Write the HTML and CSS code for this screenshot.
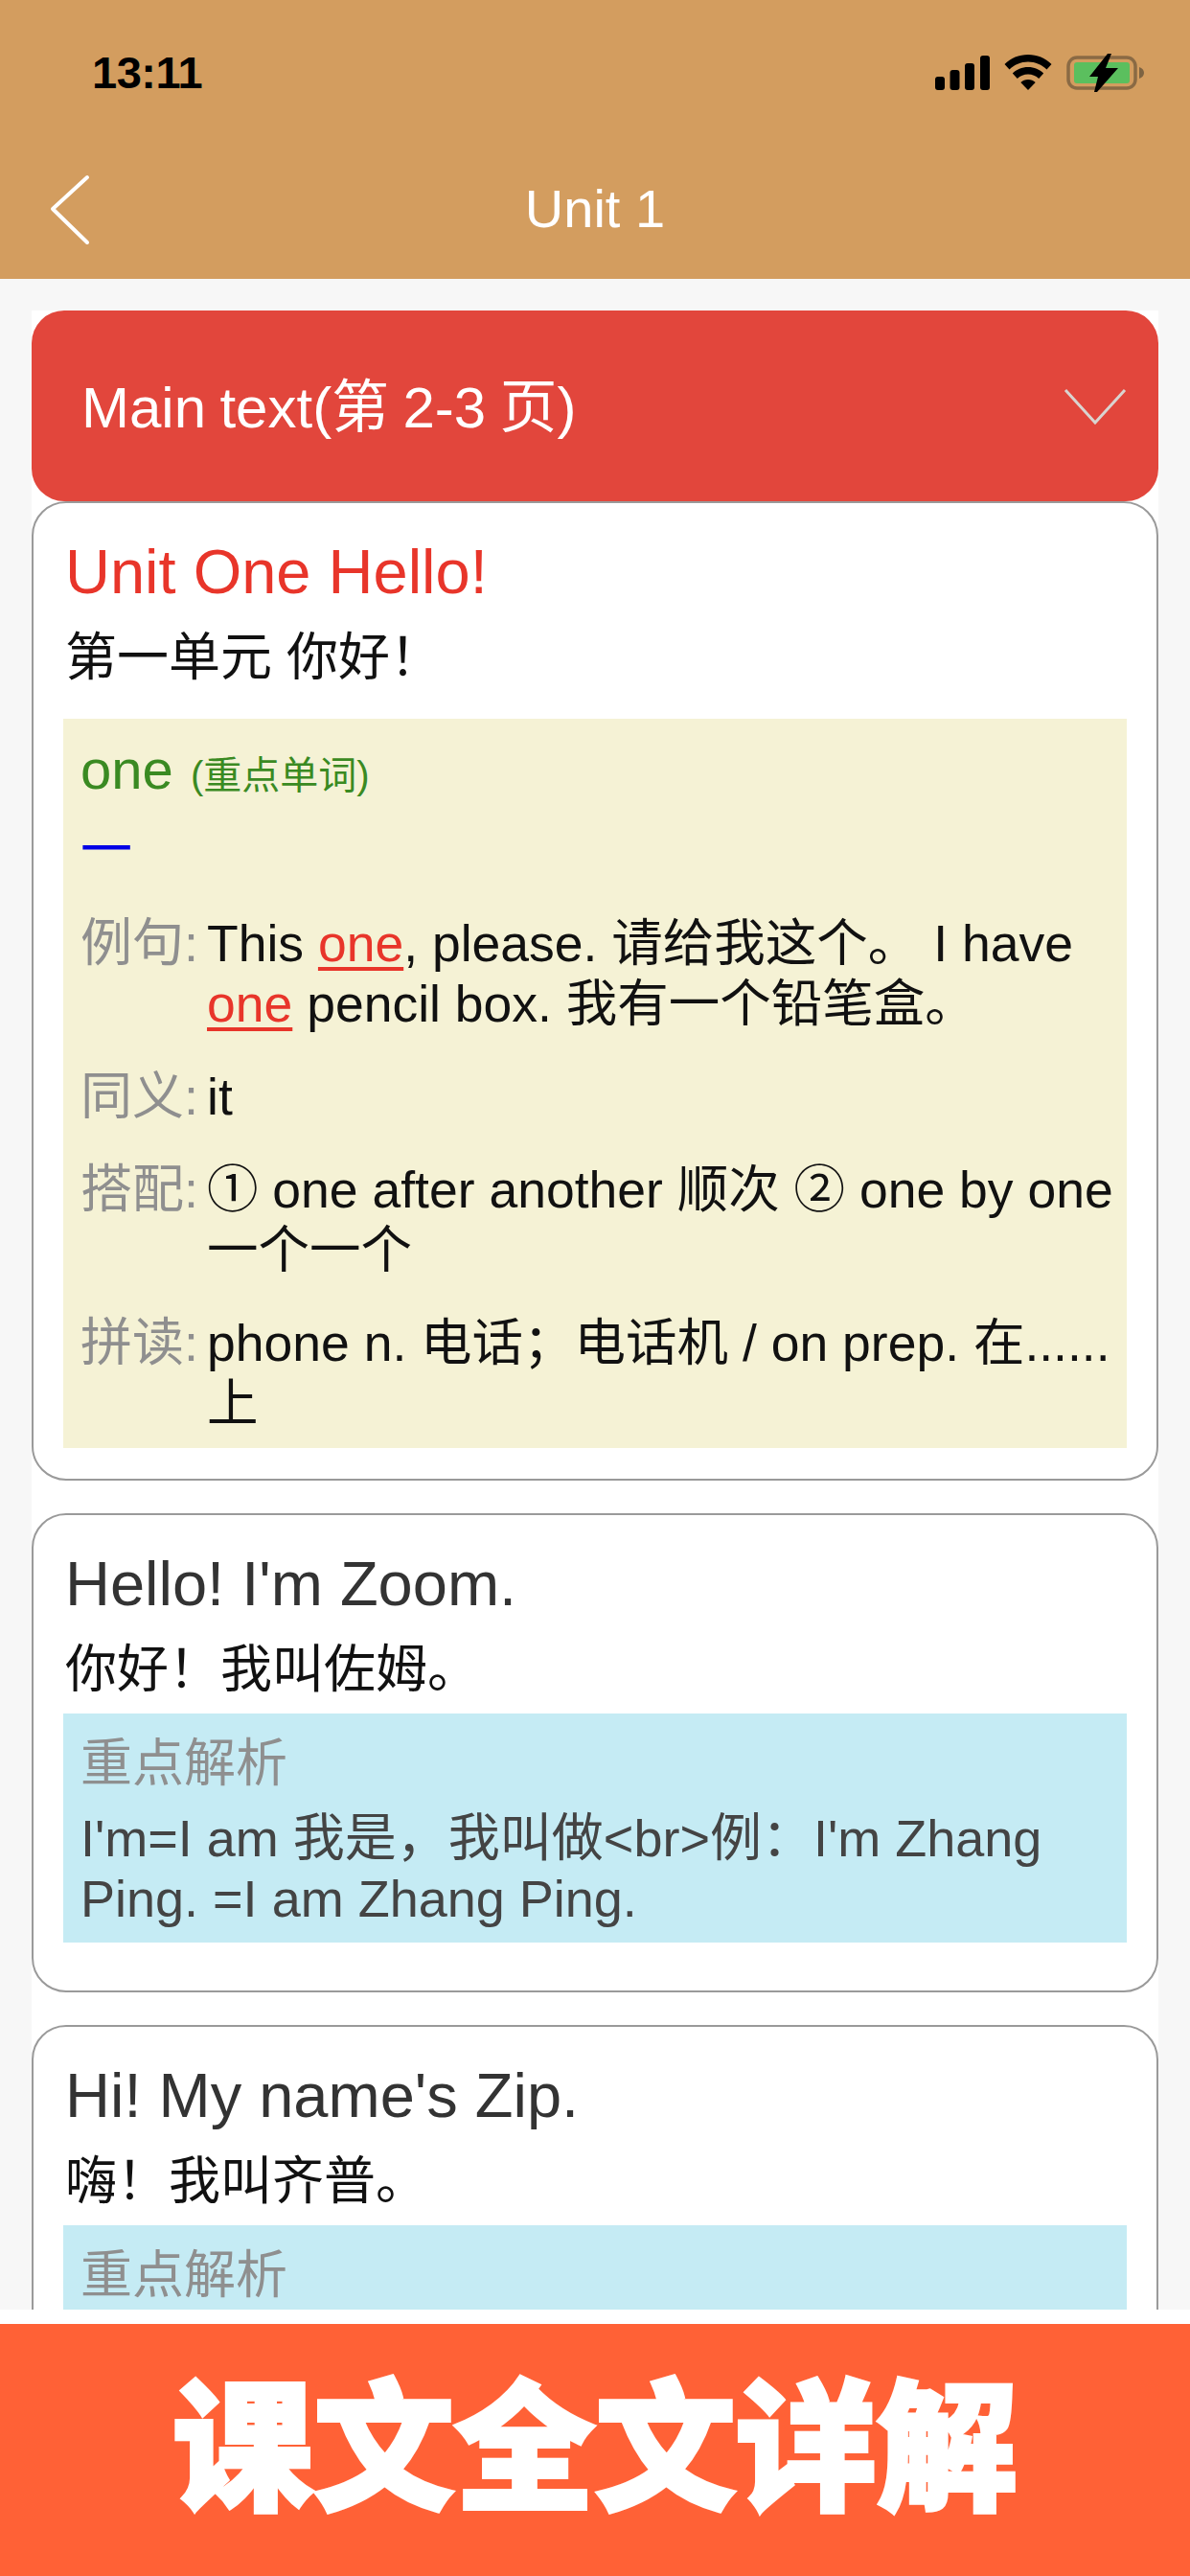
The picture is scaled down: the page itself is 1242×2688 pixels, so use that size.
FILE: index.html
```html
<!DOCTYPE html>
<html lang="zh">
<head>
<meta charset="utf-8">
<title>Unit 1</title>
<link rel="stylesheet" href="styles.css">
</head>
<body>
<div class="screen">
  <header class="topbar">
    <div class="status">
      <span class="time">13:11</span>
      <div class="status-icons">
        <svg class="i-signal" width="57" height="36" viewBox="0 0 57 36"><rect x="0" y="22" width="10" height="14" rx="3"/><rect x="15.500" y="15" width="10" height="21" rx="3"/><rect x="31" y="8" width="10" height="28" rx="3"/><rect x="47" y="0" width="10" height="36" rx="3"/></svg>
        <svg class="i-wifi" width="50" height="37" viewBox="0 0 50 37"><path d="M25 0C15.500 0 7 3.600 0.500 10L5.500 15.500C10.500 10.500 17.500 7.500 25 7.500S39.500 10.500 44.500 15.500L49.500 10C43 3.600 34.500 0 25 0Z"/><path d="M25 13C18.500 13 13 15.500 8.800 19.500L13.800 25C16.800 22 20.700 20.400 25 20.400S33.200 22 36.200 25L41.200 19.500C37 15.500 31.500 13 25 13Z"/><path d="M25 26C22 26 19.300 27.100 17.300 29L25 37L32.700 29C30.700 27.100 28 26 25 26Z"/></svg>
        <svg class="i-batt" width="82" height="40" viewBox="0 0 82 40"><rect x="2" y="4" width="70" height="32" rx="9" fill="none" stroke="#8a6a44" stroke-width="3.500"/><rect x="8" y="9" width="58" height="22" rx="3" fill="#5bbf5e"/><path d="M76 14C79 15 81 17 81 20S79 25 76 26Z" fill="#7d6342"/><path d="M24 24L43 0H47L41 15H54L32 40H29L33 24Z" fill="#000"/></svg>
      </div>
    </div>
    <nav class="nav">
      <svg class="i-back" width="42" height="74" viewBox="0 0 42 74"><path d="M39 3L3 36L39 71" fill="none" stroke="#fff" stroke-width="4" stroke-linecap="round" stroke-linejoin="round"/></svg>
      <h1 class="nav-title">Unit 1</h1>
    </nav>
  </header>

  <main class="main">
    <div class="accordion">
      <div class="acc-head">
        <span class="acc-title">Main text(第 2-3 页)</span>
        <svg class="i-chev" width="66" height="38" viewBox="0 0 66 38"><path d="M2 2L33 36L64 2" fill="none" stroke="#d9d4d0" stroke-width="3"/></svg>
      </div>
      <div class="cards">
        <section class="card card-word">
          <div class="card-text card-text-first">
            <h2 class="en en-red">Unit One Hello!</h2>
            <p class="zh zh-first">第一单元 你好！</p>
          </div>
          <div class="word-box">
            <div class="word"><span class="word-en">one</span> <span class="word-tag">(重点单词)</span></div>
            <div class="word-cn">一</div>
            <div class="row row-first"><span class="label">例句:</span><div class="val">This <u class="hl">one</u>, please. 请给我这个。 I have <u class="hl">one</u> pencil box. 我有一个铅笔盒。</div></div>
            <div class="row"><span class="label">同义:</span><div class="val">it</div></div>
            <div class="row"><span class="label">搭配:</span><div class="val">① one after another 顺次 ② one by one 一个一个</div></div>
            <div class="row"><span class="label">拼读:</span><div class="val">phone n. 电话；电话机 / on prep. 在...... 上</div></div>
          </div>
        </section>
        <section class="card">
          <div class="card-text">
            <h2 class="en">Hello! I'm Zoom.</h2>
            <p class="zh">你好！我叫佐姆。</p>
          </div>
          <div class="note">
            <div class="note-title">重点解析</div>
            <div class="note-body">I'm=I am 我是，我叫做&lt;br&gt;例：I'm Zhang Ping. =I am Zhang Ping.</div>
          </div>
        </section>
        <section class="card">
          <div class="card-text">
            <h2 class="en">Hi! My name's Zip.</h2>
            <p class="zh">嗨！我叫齐普。</p>
          </div>
          <div class="note note-open">
            <div class="note-title">重点解析</div>
          </div>
        </section>
      </div>
    </div>
  </main>

  <div class="strip"></div>
  <footer class="banner">课文全文详解</footer>
</div>
</body>
</html>
```
FILE: styles.css
```css
* { box-sizing: border-box; }
html, body { margin: 0; padding: 0; }
body {
  width: 1242px;
  height: 2688px;
  overflow: hidden;
  font-family: "Liberation Sans", "Noto Sans CJK SC", sans-serif;
  background: #f7f7f7;
}
.screen { display: flex; flex-direction: column; width: 1242px; height: 2688px; }
.topbar { flex: none; height: 291px; background: #d39d5f; display: flex; flex-direction: column; }
.status { height: 150px; display: flex; justify-content: space-between; padding: 56px 47px 0 96px; }
.time { font-size: 47px; font-weight: 700; line-height: 40px; letter-spacing: -0.5px; color: #000; }
.status-icons { display: flex; gap: 15px; align-items: flex-start; }
.i-signal { margin-top: 2px; }
.i-wifi { margin-top: 1px; }
.nav { flex: 1; position: relative; display: flex; align-items: center; justify-content: center; padding-top: 2px; padding-bottom: 8px; }
.i-back { position: absolute; left: 52px; top: 32px; }
.nav-title { margin: 0; font-size: 56px; line-height: 64px; font-weight: 400; color: #fff; }

.main { flex: 1; min-height: 0; overflow: hidden; padding-top: 33px; }
.accordion { margin: 0 33px; background: #fff; }
.acc-head {
  height: 199px;
  background: #e2463c;
  border-radius: 34px;
  color: #fff;
  font-size: 60px;
  word-spacing: -2.300px;
  display: flex;
  align-items: center;
  justify-content: space-between;
  padding: 0 33px 0 52px;
}
.acc-title { position: relative; top: -4px; }
.cards { display: flex; flex-direction: column; gap: 34px; }
.card { border: 2px solid #9a9a9a; border-radius: 36px; background: #fff; padding: 0 31px 50px; }
.card-word { padding-bottom: 32px; }
.card-text { padding: 36px 0 14px 2px; }
.card-text-first { padding-top: 36px; padding-bottom: 32px; }
.en { margin: 0; font-size: 65px; line-height: 72px; font-weight: 400; color: #333; }
.en-red { color: #e8352a; }
.zh { margin: 21px 0 0; font-size: 54px; line-height: 64px; color: #111; }
.zh-first { margin-top: 21px; }

.word-box { background: #f5f2d5; padding: 18px 4px 15px 18px; }
.word { font-size: 58px; line-height: 70px; color: #3a8a22; }
.word-tag { font-size: 40px; margin-left: 2px; }
.word-cn { margin-top: 11px; font-size: 54px; line-height: 64px; color: #0000e6; }
.row { display: flex; margin-top: 34px; font-size: 53.500px; line-height: 63px; color: #111; }
.row-first { margin-top: 34px; }
.label { flex: none; width: 132px; font-size: 54px; color: #8f8f8f; white-space: nowrap; }
.val { flex: 1; min-width: 0; }
.hl { color: #e8352a; text-decoration-color: #e8352a; text-decoration-thickness: 4px; text-underline-offset: 6px; }

.note { background: #c5ebf4; padding: 18px 18px 14px; color: #444; }
.note-open { padding-bottom: 200px; }
.note-title { font-size: 54px; line-height: 68px; color: #8f8f8f; }
.note-body { font-size: 54px; line-height: 63px; margin-top: 13px; }

.strip { flex: none; height: 15px; background: #fff; }
.banner {
  flex: none;
  height: 263px;
  background: #ff6136;
  color: #fff;
  font-size: 147px;
  font-weight: 900;
  line-height: 263px;
  text-align: center;
  -webkit-text-stroke: 4px #fff;
}
```
